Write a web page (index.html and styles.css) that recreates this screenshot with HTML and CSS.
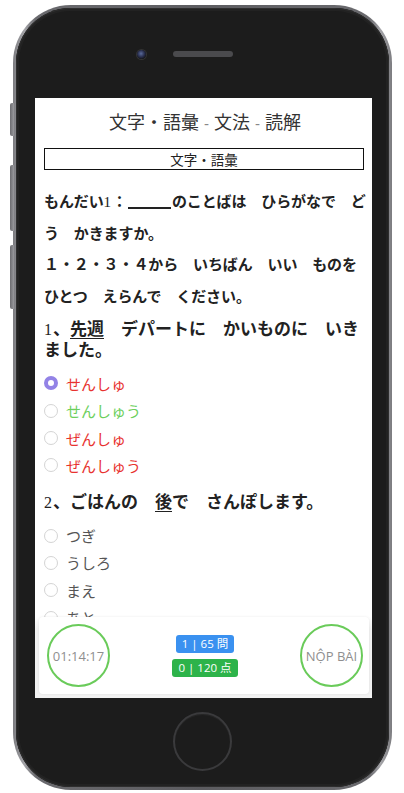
FILE: index.html
```html
<!DOCTYPE html>
<html lang="ja">
<head>
<meta charset="utf-8">
<title>文字・語彙 - 文法 - 読解</title>
<link rel="stylesheet" href="styles.css">
</head>
<body>
<div class="phone">
  <span class="side-btn mute"></span>
  <span class="side-btn vol-up"></span>
  <span class="side-btn vol-down"></span>
  <div class="bezel">
    <div class="top">
      <span class="camera"></span>
      <span class="speaker"></span>
      <span></span>
    </div>
    <div class="screen">
      <div class="content">
        <h1 class="title">文字・語彙<span class="dash">-</span>文法<span class="dash">-</span>読解</h1>
        <div class="section-box">文字・語彙</div>
        <p class="intro">もんだい<span class="num">1</span>：<span class="blank"></span>のことばは　ひらがなで　どう　かきますか。</p>
        <p class="intro">１・２・３・４から　いちばん　いい　ものを　ひとつ　えらんで　ください。</p>

        <div class="question">
          <p class="q-text"><span class="num">1</span>、<u>先週</u>　デパートに　かいものに　いきました。</p>
          <ul class="options">
            <li class="opt wrong"><span class="radio checked"></span>せんしゅ</li>
            <li class="opt right"><span class="radio"></span>せんしゅう</li>
            <li class="opt wrong"><span class="radio"></span>ぜんしゅ</li>
            <li class="opt wrong"><span class="radio"></span>ぜんしゅう</li>
          </ul>
        </div>

        <div class="question">
          <p class="q-text"><span class="num">2</span>、ごはんの　<u>後</u>で　さんぽします。</p>
          <ul class="options">
            <li class="opt"><span class="radio"></span>つぎ</li>
            <li class="opt"><span class="radio"></span>うしろ</li>
            <li class="opt"><span class="radio"></span>まえ</li>
            <li class="opt"><span class="radio"></span>あと</li>
          </ul>
        </div>
      </div>

      <div class="footer">
        <div class="footer-card">
          <div class="ring">01:14:17</div>
          <div class="badges">
            <span class="badge blue">1 | 65 問</span>
            <span class="badge green">0 | 120 点</span>
          </div>
          <div class="ring">NỘP BÀI</div>
        </div>
      </div>
    </div>
    <div class="bottom">
      <span class="home"></span>
    </div>
  </div>
</div>
</body>
</html>
```

FILE: styles.css
```css
* { box-sizing: border-box; }

html, body {
  margin: 0;
  padding: 0;
  background: #ffffff;
}

body {
  font-family: "Noto Sans CJK JP", "Noto Sans", sans-serif;
  color: #222;
}

.phone {
  position: relative;
  width: 379px;
  height: 785px;
  margin: 5px 0 0 13px;
  padding: 3px;
  border-radius: 58px;
  background: linear-gradient(90deg, #7c7c80 0%, #a4a4a8 3%, #6a6a6e 6%, #5c5c60 50%, #6a6a6e 94%, #a4a4a8 97%, #7c7c80 100%);
}

.side-btn {
  position: absolute;
  left: -3px;
  width: 4px;
  border-radius: 2px 0 0 2px;
  background: linear-gradient(90deg, #6c6c70, #9a9a9e);
}
.mute { top: 98px; height: 33px; }
.vol-up { top: 160px; height: 66px; }
.vol-down { top: 240px; height: 64px; }

.bezel {
  height: 100%;
  border-radius: 55px;
  background: #1c1c1c;
  box-shadow: inset 0 0 0 1px #2e2e2e, inset 0 0 0 3px #222;
  display: flex;
  flex-direction: column;
  align-items: center;
}

.top {
  height: 90px;
  width: 100%;
  display: grid;
  grid-template-columns: 1fr auto 1fr;
  align-items: center;
  padding-top: 2px;
}

.camera {
  justify-self: end;
  margin-right: 27px;
  width: 9px;
  height: 9px;
  border-radius: 50%;
  background: radial-gradient(circle at 45% 40%, #5a6a9a 0%, #2a3050 45%, #111 80%);
  box-shadow: 0 0 0 1px #333;
}

.speaker {
  width: 60px;
  height: 6px;
  border-radius: 3px;
  background: #4a4a4d;
}

.screen {
  position: relative;
  width: 337px;
  height: 600px;
  margin-left: 2px;
  background: #fff;
  overflow: hidden;
}

.content {
  padding: 10px 6px 0 9px;
}

.title {
  margin: 0;
  text-align: center;
  font-size: 18px;
  font-weight: 400;
  line-height: 26px;
  color: #333;
}
.title .dash {
  display: inline-block;
  margin: 0 5px;
  font-family: "Liberation Sans", sans-serif;
  font-size: 15px;
  line-height: 1;
  color: #888;
}

.section-box {
  margin: 14px 2px 0 0;
  height: 22px;
  border: 1px solid #111;
  text-align: center;
  font-size: 13.5px;
  line-height: 20px;
  color: #222;
}

.intro {
  margin: 0;
  font-size: 15px;
  font-weight: 700;
  line-height: 31.7px;
  letter-spacing: -0.1px;
  color: #222;
}
.section-box + .intro { margin-top: 15px; }

.num {
  display: inline-block;
  margin-right: 1px;
  font-family: "Liberation Serif", "DejaVu Serif", serif;
  font-weight: 400;
  line-height: 1;
}

.blank {
  display: inline-block;
  width: 43px;
  height: 2px;
  margin: 0 1px;
  background: #222;
  vertical-align: -2px;
}

.question { margin-top: 5px; }
.question + .question { margin-top: 11px; }

.q-text {
  margin: 0;
  font-size: 17px;
  font-weight: 700;
  line-height: 21px;
  color: #222;
}
.q-text .num { font-size: 16px; }
.q-text u { text-underline-offset: 3px; }

.options {
  list-style: none;
  margin: 11px 0 0;
  padding: 0;
}

.opt {
  display: flex;
  align-items: center;
  height: 27.3px;
  font-size: 15px;
  color: #555;
}
.opt.wrong { color: #e8322f; }
.opt.right { color: #6ccf5c; }

.radio {
  width: 14px;
  height: 14px;
  margin: 0 8px 0 0;
  border-radius: 50%;
  border: 1px solid #d4d4d4;
  background: #fff;
  flex: none;
}
.radio.checked {
  border: 4px solid #9383e6;
  background: #fff;
}

.footer {
  position: absolute;
  left: 0;
  right: 0;
  bottom: 0;
  padding: 0 3px 4px 4px;
  background: linear-gradient(rgba(245,245,245,0), #f2f2f2 12px);
}

.footer-card {
  height: 77px;
  background: #fff;
  border-radius: 4px;
  box-shadow: 0 0 3px rgba(0,0,0,0.08);
  display: flex;
  align-items: center;
  justify-content: space-between;
  padding: 0 6px 0 8px;
}

.ring {
  width: 63px;
  height: 63px;
  border-radius: 50%;
  border: 2px solid #6acb5a;
  display: flex;
  align-items: center;
  justify-content: center;
  font-family: "Open Sans", "Noto Sans", sans-serif;
  font-size: 13px;
  color: #8f8f8f;
}

.badges {
  display: flex;
  flex-direction: column;
  align-items: center;
  gap: 6px;
}

.badge {
  height: 18px;
  padding: 0 6px;
  border-radius: 3px;
  font-family: "Open Sans", "Noto Sans", "Noto Sans CJK JP", sans-serif;
  font-size: 11.5px;
  line-height: 18px;
  color: #fff;
  white-space: nowrap;
}
.badge.blue { background: #3a91f0; }
.badge.green { background: #2db34a; }

.bottom {
  flex: 1;
  display: flex;
  align-items: center;
  justify-content: center;
  width: 100%;
}

.home {
  width: 59px;
  height: 59px;
  border-radius: 50%;
  border: 2px solid #3a3a3c;
  box-shadow: inset 0 1px 1px rgba(255,255,255,0.05);
  margin-top: -2px;
}
```
